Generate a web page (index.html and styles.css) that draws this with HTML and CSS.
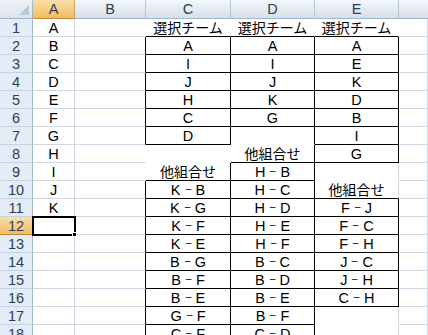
FILE: index.html
```html
<!DOCTYPE html>
<html lang="ja">
<head>
<meta charset="utf-8">
<link rel="stylesheet" href="styles.css">
</head>
<body>
<div class="sheet">
  <div class="corner"><span class="tri"></span></div>
  <div class="ch sel">A</div><div class="ch">B</div><div class="ch">C</div><div class="ch">D</div><div class="ch">E</div><div class="ch last"></div>

  <div class="rh">1</div><div class="c">A</div><div class="c nb-r"></div><div class="c w bb jp">選択チーム</div><div class="c w bb jp">選択チーム</div><div class="c w bb jp">選択チーム</div><div class="c"></div>
  <div class="rh">2</div><div class="c">B</div><div class="c br"></div><div class="c w br bb">A</div><div class="c w br bb">A</div><div class="c w br bb">A</div><div class="c"></div>
  <div class="rh">3</div><div class="c">C</div><div class="c br"></div><div class="c w br bb">I</div><div class="c w br bb">I</div><div class="c w br bb">E</div><div class="c"></div>
  <div class="rh">4</div><div class="c">D</div><div class="c br"></div><div class="c w br bb">J</div><div class="c w br bb">J</div><div class="c w br bb">K</div><div class="c"></div>
  <div class="rh">5</div><div class="c">E</div><div class="c br"></div><div class="c w br bb">H</div><div class="c w br bb">K</div><div class="c w br bb">D</div><div class="c"></div>
  <div class="rh">6</div><div class="c">F</div><div class="c br"></div><div class="c w br bb">C</div><div class="c w br bb">G</div><div class="c w br bb">B</div><div class="c"></div>
  <div class="rh">7</div><div class="c">G</div><div class="c br"></div><div class="c w br bb">D</div><div class="c w br"></div><div class="c w br bb">I</div><div class="c"></div>
  <div class="rh">8</div><div class="c">H</div><div class="c nb-r"></div><div class="c w"></div><div class="c w br bb jp">他組合せ</div><div class="c w br bb">G</div><div class="c"></div>
  <div class="rh">9</div><div class="c">I</div><div class="c nb-r"></div><div class="c w br bb jp">他組合せ</div><div class="c w br bb">H<span class="dash">－</span>B</div><div class="c w gr"></div><div class="c"></div>
  <div class="rh">10</div><div class="c">J</div><div class="c br"></div><div class="c w br bb">K<span class="dash">－</span>B</div><div class="c w br bb">H<span class="dash">－</span>C</div><div class="c w gr bb jp">他組合せ</div><div class="c"></div>
  <div class="rh">11</div><div class="c">K</div><div class="c br"></div><div class="c w br bb">K<span class="dash">－</span>G</div><div class="c w br bb">H<span class="dash">－</span>D</div><div class="c w br bb">F<span class="dash">－</span>J</div><div class="c"></div>
  <div class="rh sel">12</div><div class="c active"><span class="handle"></span></div><div class="c br"></div><div class="c w br bb">K<span class="dash">－</span>F</div><div class="c w br bb">H<span class="dash">－</span>E</div><div class="c w br bb">F<span class="dash">－</span>C</div><div class="c"></div>
  <div class="rh">13</div><div class="c"></div><div class="c br"></div><div class="c w br bb">K<span class="dash">－</span>E</div><div class="c w br bb">H<span class="dash">－</span>F</div><div class="c w br bb">F<span class="dash">－</span>H</div><div class="c"></div>
  <div class="rh">14</div><div class="c"></div><div class="c br"></div><div class="c w br bb">B<span class="dash">－</span>G</div><div class="c w br bb">B<span class="dash">－</span>C</div><div class="c w br bb">J<span class="dash">－</span>C</div><div class="c"></div>
  <div class="rh">15</div><div class="c"></div><div class="c br"></div><div class="c w br bb">B<span class="dash">－</span>F</div><div class="c w br bb">B<span class="dash">－</span>D</div><div class="c w br bb">J<span class="dash">－</span>H</div><div class="c"></div>
  <div class="rh">16</div><div class="c"></div><div class="c br"></div><div class="c w br bb">B<span class="dash">－</span>E</div><div class="c w br bb">B<span class="dash">－</span>E</div><div class="c w br bb">C<span class="dash">－</span>H</div><div class="c"></div>
  <div class="rh">17</div><div class="c"></div><div class="c br"></div><div class="c w br bb">G<span class="dash">－</span>F</div><div class="c w br bb">B<span class="dash">－</span>F</div><div class="c w gr"></div><div class="c"></div>
  <div class="rh">18</div><div class="c"></div><div class="c br"></div><div class="c w br bb">C<span class="dash">－</span>F</div><div class="c w br bb">C<span class="dash">－</span>D</div><div class="c w gr"></div><div class="c"></div>
</div>
</body>
</html>
```

FILE: styles.css
```css
html, body {
  margin: 0;
  padding: 0;
  background: #ffffff;
  overflow: hidden;
}

.sheet {
  display: grid;
  grid-template-columns: 33px 42px 71px 85px 84px 84px 29px;
  grid-template-rows: 19px;
  grid-auto-rows: 18px;
  font-family: "Liberation Sans", "Noto Sans CJK JP", sans-serif;
  font-size: 14.5px;
  color: #000;
  width: 428px;
}

.sheet > div {
  box-sizing: border-box;
  border-right: 1px solid #d0d7e5;
  border-bottom: 1px solid #d0d7e5;
  display: flex;
  align-items: flex-end;
  justify-content: center;
  line-height: 16px;
  white-space: nowrap;
  position: relative;
}

.sheet > .jp {
  font-family: "Noto Sans CJK JP", sans-serif;
  font-size: 14px;
  line-height: 17px;
}

.dash {
  font-family: "Noto Sans CJK JP", sans-serif;
  font-size: 11px;
  display: inline-block;
  width: 15px;
  text-align: center;
  transform: scaleX(0.7) translateY(-1px);
  line-height: 16px;
}

.corner {
  background: linear-gradient(#eef2f8, #dde4ee);
}
.sheet > .corner {
  border-right-color: #9eb6ce;
  border-bottom-color: #9eb6ce;
}
.corner .tri {
  position: absolute;
  right: 3px;
  bottom: 3px;
  width: 0;
  height: 0;
  border-left: 10px solid transparent;
  border-bottom: 10px solid #b8c6d8;
}

.sheet > .ch {
  background: linear-gradient(#f4f7fb 0%, #e5ebf3 50%, #d7dfea 100%);
  border-right: 1px solid #b6c7da;
  border-bottom: 1px solid #9eb6ce;
  color: #2a3f57;
  align-items: center;
}
.sheet > .ch.last {
  border-right: none;
}
.sheet > .ch.sel {
  background: linear-gradient(#f9dea8 0%, #f6cd85 50%, #f2bc62 100%);
  border-right-color: #d7a654;
  border-bottom-color: #c28a30;
}

.sheet > .rh {
  background: #e4ecf7;
  border-right: 1px solid #9eb6ce;
  border-bottom: 1px solid #c5d3e3;
  color: #2a3f57;
  align-items: center;
}
.sheet > .rh.sel {
  background: linear-gradient(#f9dea8 0%, #f6cd85 50%, #f2bc62 100%);
  border-bottom-color: #c28a30;
}

.sheet > .w {
  border-right-color: #ffffff;
  border-bottom-color: #ffffff;
}
.sheet > .gr {
  border-right-color: #d0d7e5;
}
.sheet > .nb-r {
  border-right-color: #ffffff;
}
.sheet > .br {
  border-right-color: #000000;
}
.sheet > .bb {
  border-bottom-color: #000000;
}

.sheet > .active {
  outline: 2px solid #000;
  outline-offset: -1px;
  z-index: 2;
}
.active .handle {
  position: absolute;
  right: -3px;
  bottom: -3px;
  width: 5px;
  height: 5px;
  background: #000;
  border: 1px solid #fff;
  box-sizing: border-box;
}
```
